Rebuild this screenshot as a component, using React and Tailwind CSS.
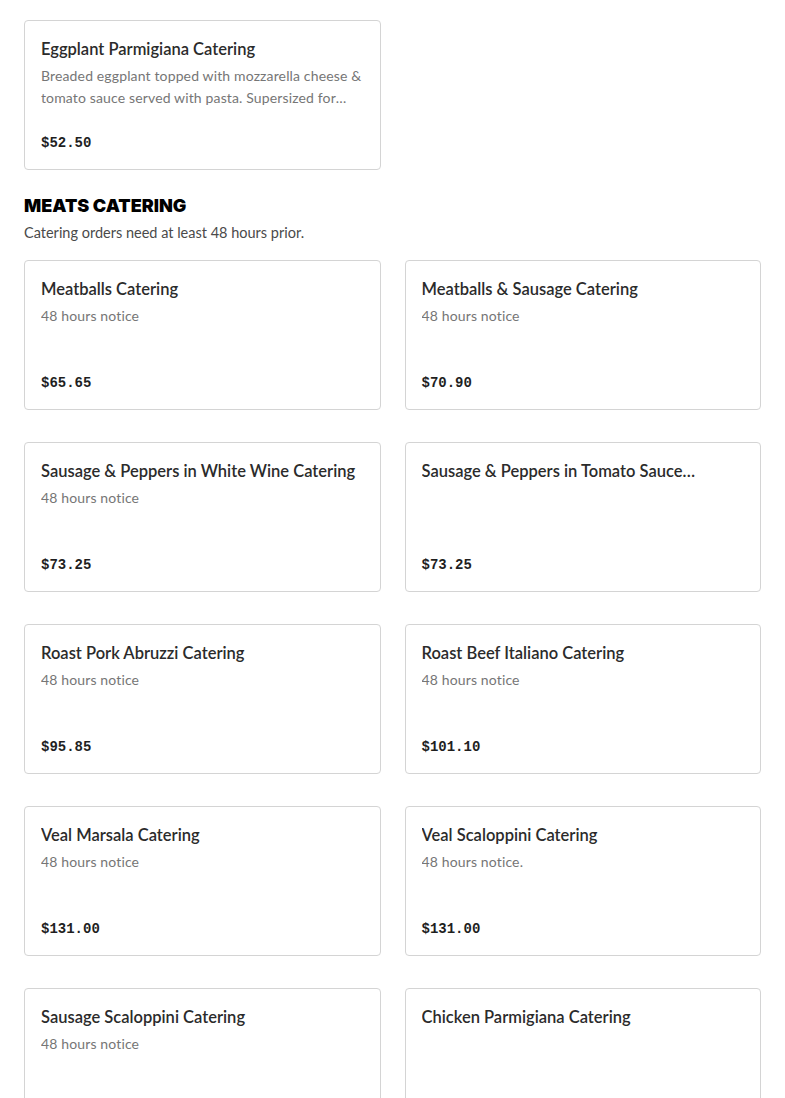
const items = [
  ['Meatballs Catering', '48 hours notice', '$65.65'],
  ['Meatballs & Sausage Catering', '48 hours notice', '$70.90'],
  ['Sausage & Peppers in White Wine Catering', '48 hours notice', '$73.25'],
  ['Sausage & Peppers in Tomato Sauce Catering', '', '$73.25'],
  ['Roast Pork Abruzzi Catering', '48 hours notice', '$95.85'],
  ['Roast Beef Italiano Catering', '48 hours notice', '$101.10'],
  ['Veal Marsala Catering', '48 hours notice', '$131.00'],
  ['Veal Scaloppini Catering', '48 hours notice.', '$131.00'],
  ['Sausage Scaloppini Catering', '48 hours notice', '$131.00'],
  ['Chicken Parmigiana Catering', '', '$95.85']
];

const Card = ({ title, desc, price }) => (
  <div className="flex h-[150px] flex-col justify-between rounded border border-[#d4d4d4] bg-white px-4 pb-4 pt-4">
    <div>
      <p className="line-clamp-1 text-[16.5px] font-semibold leading-6 text-[#2b2b2b]">{title}</p>
      {desc ? (
        <p className="mt-1 line-clamp-2 text-[14px] leading-[22px] tracking-[0.01em] text-[#767676]">{desc}</p>
      ) : null}
    </div>
    <p className="font-['Liberation_Mono',monospace] text-[14px] font-bold leading-5 text-[#1f1f1f]">{price}</p>
  </div>
);

const App = () => (
  <div className="min-h-screen bg-white px-6 pt-5 font-['Lato',sans-serif]">
    <div className="grid grid-cols-2 gap-6">
      <Card
        title="Eggplant Parmigiana Catering"
        desc="Breaded eggplant topped with mozzarella cheese & tomato sauce served with pasta. Supersized for sharing with the whole party."
        price="$52.50"
      />
    </div>

    <h2 className="mt-6 font-['Inter',sans-serif] text-[18px] font-black uppercase leading-6 text-black">Meats Catering</h2>
    <p className="mt-1 text-[14.5px] leading-[22px] text-[#4a4a4a]">Catering orders need at least 48 hours prior.</p>

    <div className="mt-4 grid grid-cols-2 gap-x-6 gap-y-8">
      {items.map(([title, desc, price]) => (
        <Card key={title} title={title} desc={desc} price={price} />
      ))}
    </div>
  </div>
);

export default App;
